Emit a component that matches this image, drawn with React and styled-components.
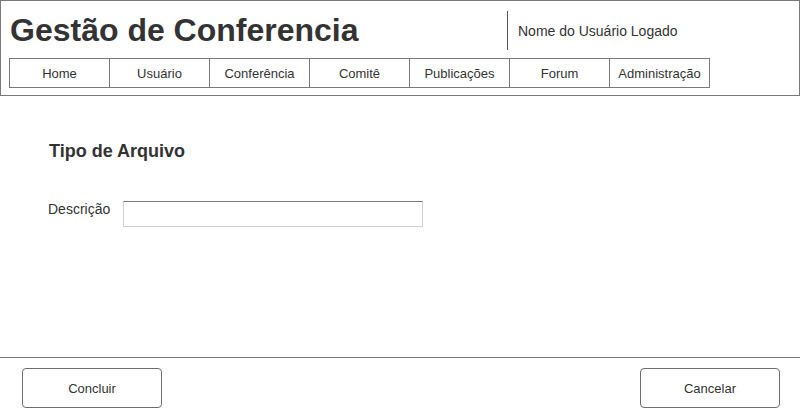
import React from "react";
import styled, { createGlobalStyle } from "styled-components";

const GlobalStyle = createGlobalStyle`
  html, body {
    margin: 0;
    padding: 0;
    background: #ffffff;
  }
  body {
    font-family: "Liberation Sans", Arial, sans-serif;
    color: #333333;
  }
  #root {
    height: 408px;
  }
`;

const Page = styled.div`
  width: 800px;
  height: 408px;
  display: flex;
  flex-direction: column;
  overflow: hidden;
`;

const Header = styled.header`
  box-sizing: border-box;
  height: 96px;
  border: 1px solid #7a7a7a;
  padding: 0 8px;
`;

const TopRow = styled.div`
  display: flex;
  height: 57px;
`;

const Title = styled.h1`
  width: 498px;
  margin: 13px 0 0 0;
  font-size: 32px;
  line-height: 32px;
  font-weight: bold;
  color: #333333;
  padding-left: 1px;
  box-sizing: border-box;
`;

const UserBox = styled.div`
  margin-top: 10px;
  height: 39px;
  display: flex;
  align-items: center;
  padding-left: 10px;
  border-left: 1px solid #555555;
  font-size: 14px;
  color: #333333;
`;

const Nav = styled.nav`
  display: flex;
  width: max-content;
  border: 1px solid #7a7a7a;
  border-right: none;
`;

const NavItem = styled.div`
  box-sizing: border-box;
  width: 100px;
  height: 28px;
  border-right: 1px solid #7a7a7a;
  display: flex;
  align-items: center;
  justify-content: center;
  font-size: 13px;
  color: #333333;
`;

const Main = styled.main`
  flex: 1;
  padding-left: 48px;
`;

const Heading = styled.h2`
  margin: 44px 0 0 1px;
  font-size: 18px;
  line-height: 22px;
  font-weight: bold;
  color: #333333;
`;

const FieldRow = styled.div`
  display: flex;
  align-items: flex-start;
  margin-top: 39px;
  gap: 13px;
`;

const Label = styled.label`
  font-size: 14px;
  line-height: 16px;
  color: #333333;
`;

const Input = styled.input`
  box-sizing: border-box;
  width: 300px;
  height: 26px;
  margin: 0;
  border: 1px solid #cfcfcf;
  border-top-color: #7a7a7a;
  border-radius: 0;
  outline: none;
  padding: 0 4px;
  font-family: inherit;
`;

const Footer = styled.footer`
  box-sizing: border-box;
  height: 51px;
  border-top: 1px solid #7a7a7a;
  padding: 10px 20px 0 22px;
  display: flex;
  justify-content: space-between;
  align-items: flex-start;
`;

const Button = styled.button`
  box-sizing: border-box;
  width: 140px;
  height: 40px;
  background: #ffffff;
  border: 1px solid #6e6e6e;
  border-radius: 4px;
  font-family: "Liberation Sans", Arial, sans-serif;
  font-size: 13px;
  color: #333333;
  cursor: pointer;
`;

const menu = [
  "Home",
  "Usuário",
  "Conferência",
  "Comitê",
  "Publicações",
  "Forum",
  "Administração",
];

export default function App() {
  return (
    <>
      <GlobalStyle />
      <Page>
        <Header>
          <TopRow>
            <Title>Gestão de Conferencia</Title>
            <UserBox>Nome do Usuário Logado</UserBox>
          </TopRow>
          <Nav>
            {menu.map((m) => (
              <NavItem key={m}>{m}</NavItem>
            ))}
          </Nav>
        </Header>
        <Main>
          <Heading>Tipo de Arquivo</Heading>
          <FieldRow>
            <Label htmlFor="descricao">Descrição</Label>
            <Input id="descricao" type="text" />
          </FieldRow>
        </Main>
        <Footer>
          <Button>Concluir</Button>
          <Button>Cancelar</Button>
        </Footer>
      </Page>
    </>
  );
}
